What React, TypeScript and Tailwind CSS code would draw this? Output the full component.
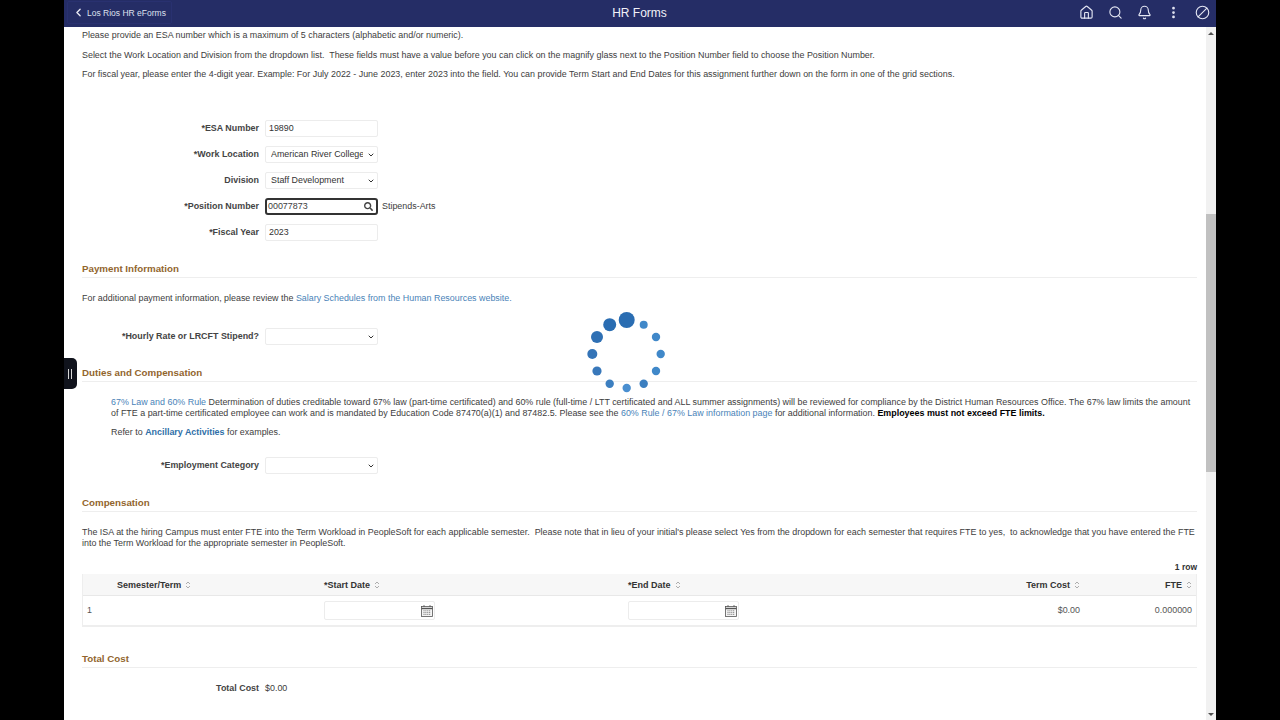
import { Home, Search, Bell, EllipsisVertical, Ban, ChevronLeft, ChevronDown } from "lucide-react";
import { FaSearch } from "react-icons/fa";
import type { ReactNode } from "react";

const dots: [number, number, number, string][] = [
  [626.7, 320, 8, "#2a6db2"],
  [609.7, 324.7, 6.5, "#2a6db2"],
  [597, 337, 6, "#2f70b4"],
  [592.3, 354, 5, "#3474b7"],
  [597, 371, 4.6, "#3878ba"],
  [609.7, 383.7, 4.2, "#3c7fc0"],
  [626.7, 388, 4.2, "#4a8fd0"],
  [643.7, 383.7, 4.2, "#3c7fc0"],
  [656, 371, 4.2, "#4088c9"],
  [660.7, 354, 4.2, "#4088c9"],
  [656, 337, 4.2, "#4088c9"],
  [643.7, 324.7, 4, "#4088c9"],
];

function Head({ children, mt }: { children: ReactNode; mt: string }) {
  return (
    <div className={`${mt} h-[17px] flex items-center border-b border-[#eeeeee] text-[9.75px] font-bold text-[#92652d]`}>
      {children}
    </div>
  );
}

function Row({ label, children }: { label: string; children: ReactNode }) {
  return (
    <div className="flex items-center h-[18px]">
      <div className="w-[177px] text-right font-bold text-[#444444]">{label}</div>
      <div className="ml-[6px] flex items-center">{children}</div>
    </div>
  );
}

function TextBox({ value }: { value: string }) {
  return (
    <input
      readOnly
      value={value}
      className="w-[113px] h-[17px] px-[3px] text-[8.9px] text-[#333333] bg-white border border-[#ececec] rounded-[2px] outline-none"
    />
  );
}

function Drop({ value, options }: { value?: string; options: string[] }) {
  return (
    <div className="relative w-[113px] h-[17px]">
      <select
        defaultValue={value}
        className="appearance-none w-full h-full pl-[5px] pr-[14px] text-[8.9px] text-[#333333] bg-white border border-[#ececec] rounded-[2px] outline-none"
      >
        {options.map((o) => (
          <option key={o}>{o}</option>
        ))}
      </select>
      <ChevronDown size={8} strokeWidth={3} className="absolute right-[3px] top-[5px] text-[#333333] pointer-events-none" />
    </div>
  );
}

function Sort() {
  return (
    <svg width="6" height="8" viewBox="0 0 6 8" className="ml-[4px]" fill="none" stroke="#999999" strokeWidth="0.8">
      <path d="M1 3 L3 1 L5 3" />
      <path d="M1 5 L3 7 L5 5" />
    </svg>
  );
}

function Calendar() {
  return (
    <svg width="12" height="12" viewBox="0 0 12 12" fill="none" stroke="#555555" strokeWidth="0.8">
      <rect x="0.5" y="1.5" width="11" height="10" fill="#f4f4f4" />
      <path d="M0.5 3.5 H11.5" strokeWidth="1.4" />
      <path d="M3 0 V2 M9 0 V2" />
      <path d="M2.5 5.8 H9.5 M2.5 7.6 H9.5 M2.5 9.4 H9.5" strokeDasharray="1 0.9" />
    </svg>
  );
}

function DateBox() {
  return (
    <div className="w-[111px] h-[19px] bg-white border border-[#ececec] rounded-[2px] flex items-center justify-end pr-[1px]">
      <Calendar />
    </div>
  );
}

export default function App() {
  return (
    <div
      className="w-[1280px] h-[720px] bg-black flex justify-center overflow-hidden relative text-[8.92px] leading-[10px] text-[#3d3d3d]"
      style={{ fontFamily: '"Liberation Sans", Arial, sans-serif' }}
    >
      <div className="w-[1152px] h-[720px] flex flex-col bg-white">
        <header className="h-[27px] shrink-0 bg-[#252d66] flex items-center text-white pb-[2px]">
          <div className="ml-[3px] h-[23px] w-[105px] flex items-center rounded-[2px] border border-[#293170]">
            <ChevronLeft size={13} strokeWidth={2.5} className="ml-[4px] text-[#e8e8f2]" />
            <span className="ml-[2px] text-[8.5px] text-[#dfe1ee]">Los Rios HR eForms</span>
          </div>
          <div className="flex-1 text-center text-[12px] leading-[14px] pl-[28px] text-[#f2f2f8]">HR Forms</div>
          <div className="flex items-center text-[#e4e6f3]">
            <Home size={15} strokeWidth={1.8} />
            <Search size={15} strokeWidth={1.8} className="ml-[14px]" />
            <Bell size={15} strokeWidth={1.8} className="ml-[14px]" />
            <EllipsisVertical size={15} strokeWidth={2.4} className="ml-[14px]" />
            <Ban size={15} strokeWidth={1.8} className="ml-[14px] mr-[6px] -scale-x-100" />
          </div>
        </header>

        <div className="flex-1 flex min-h-0">
          <main className="flex-1 pl-[18px] pr-[9px] overflow-hidden">
            <p className="mt-[3px] h-[10px]">Please provide an ESA number which is a maximum of 5 characters (alphabetic and/or numeric).</p>
            <p className="mt-[10px] h-[10px] whitespace-pre">Select the Work Location and Division from the dropdown list.  These fields must have a value before you can click on the magnify glass next to the Position Number field to choose the Position Number.</p>
            <p className="mt-[9px] h-[10px]">For fiscal year, please enter the 4-digit year. Example: For July 2022 - June 2023, enter 2023 into the field. You can provide Term Start and End Dates for this assignment further down on the form in one of the grid sections.</p>

            <div className="mt-[40px] flex flex-col gap-[8px]">
              <Row label="*ESA Number"><TextBox value="19890" /></Row>
              <Row label="*Work Location"><Drop value="American River College" options={["American River College"]} /></Row>
              <Row label="Division"><Drop value="Staff Development" options={["Staff Development"]} /></Row>
              <Row label="*Position Number">
                <div className="w-[113px] h-[17px] flex items-center bg-white border-2 border-[#333333] rounded-[3px] pl-[1px] pr-[3px]">
                  <span className="flex-1">00077873</span>
                  <FaSearch size={9} className="text-[#444444]" />
                </div>
                <span className="ml-[4px]">Stipends-Arts</span>
              </Row>
              <Row label="*Fiscal Year"><TextBox value="2023" /></Row>
            </div>

            <Head mt="mt-[20px]">Payment Information</Head>
            <p className="mt-[15px] h-[10px]">
              For additional payment information, please review the <span className="text-[#4a83b8]">Salary Schedules from the Human Resources website.</span>
            </p>
            <div className="mt-[24px]">
              <Row label="*Hourly Rate or LRCFT Stipend?"><Drop options={[""]} /></Row>
            </div>

            <Head mt="mt-[20px]">Duties and Compensation</Head>
            <p className="mt-[15px] pl-[29px] pr-[5px] leading-[10.5px]">
              <span className="text-[#4a83b8]">67% Law and 60% Rule</span> Determination of duties creditable toward 67% law (part-time certificated) and 60% rule (full-time / LTT certificated and ALL summer assignments) will be reviewed for compliance by the District Human Resources Office. The 67% law limits the amount of FTE a part-time certificated employee can work and is mandated by Education Code 87470(a)(1) and 87482.5. Please see the <span className="text-[#4a83b8]">60% Rule / 67% Law information page</span> for additional information. <b className="text-black">Employees must not exceed FTE limits.</b>
            </p>
            <p className="mt-[9px] pl-[29px] h-[10px]">
              Refer to <b className="text-[#2f6fa8]">Ancillary Activities</b> for examples.
            </p>
            <div className="mt-[19px]">
              <Row label="*Employment Category"><Drop options={[""]} /></Row>
            </div>

            <Head mt="mt-[21px]">Compensation</Head>
            <p className="mt-[15px] leading-[10.5px] whitespace-pre-wrap">
              {"The ISA at the hiring Campus must enter FTE into the Term Workload in PeopleSoft for each applicable semester.  Please note that in lieu of your initial's please select Yes from the dropdown for each semester that requires FTE to yes,  to acknowledge that you have entered the FTE into the Term Workload for the appropriate semester in PeopleSoft."}
            </p>
            <div className="mt-[14px] h-[10px] text-right font-bold text-[8.5px] text-[#333333]">1 row</div>

            <div className="mt-[2px] border border-[#eeeeee] border-t-0 border-b-2">
              <div className="h-[22px] bg-[#f7f7f7] border-b border-[#e8e8e8] grid grid-cols-[241px_304px_1fr_116px] items-center font-bold text-[9px] text-[#333333]">
                <div className="pl-[34px] flex items-center">Semester/Term<Sort /></div>
                <div className="flex items-center">*Start Date<Sort /></div>
                <div className="flex items-center justify-between">
                  <span className="flex items-center">*End Date<Sort /></span>
                  <span className="flex items-center">Term Cost<Sort /></span>
                </div>
                <div className="flex items-center justify-end pr-[4px]">FTE<Sort /></div>
              </div>
              <div className="h-[29px] grid grid-cols-[241px_304px_1fr_116px] items-center text-[#555555]">
                <div className="pl-[4px] pb-[2px]">1</div>
                <DateBox />
                <div className="flex items-center justify-between">
                  <DateBox />
                  <span className="pb-[2px]">$0.00</span>
                </div>
                <div className="text-right pr-[4px] pb-[2px]">0.000000</div>
              </div>
            </div>

            <Head mt="mt-[24px]">Total Cost</Head>
            <div className="mt-[15px] flex items-center h-[10px]">
              <div className="w-[177px] text-right font-bold text-[#444444]">Total Cost</div>
              <div className="ml-[6px]">$0.00</div>
            </div>
          </main>

          <div className="w-[10px] shrink-0 bg-[#f1f1f1] flex flex-col items-center">
            <div className="mt-[5px] w-0 h-0 border-x-[3px] border-x-transparent border-b-[3px] border-b-[#505050]" />
            <div className="mt-[179px] w-full h-[258px] bg-[#c1c1c1]" />
            <div className="mt-auto mb-[4px] w-0 h-0 border-x-[3px] border-x-transparent border-t-[3px] border-t-[#505050]" />
          </div>
        </div>
      </div>

      <div className="absolute left-[64px] top-[358px] w-[13px] h-[31px] bg-[#10131c] rounded-r-[5px] flex items-center justify-center gap-[1.5px] pr-[1px]">
        <span className="w-[1.5px] h-[10px] bg-[#d8d8d8]" />
        <span className="w-[1.5px] h-[10px] bg-[#d8d8d8]" />
      </div>

      <svg className="absolute left-0 top-0 pointer-events-none" width="1280" height="720" viewBox="0 0 1280 720">
        {dots.map(([cx, cy, r, c]) => (
          <circle key={`${cx}-${cy}`} cx={cx} cy={cy} r={r} fill={c} />
        ))}
      </svg>
    </div>
  );
}
